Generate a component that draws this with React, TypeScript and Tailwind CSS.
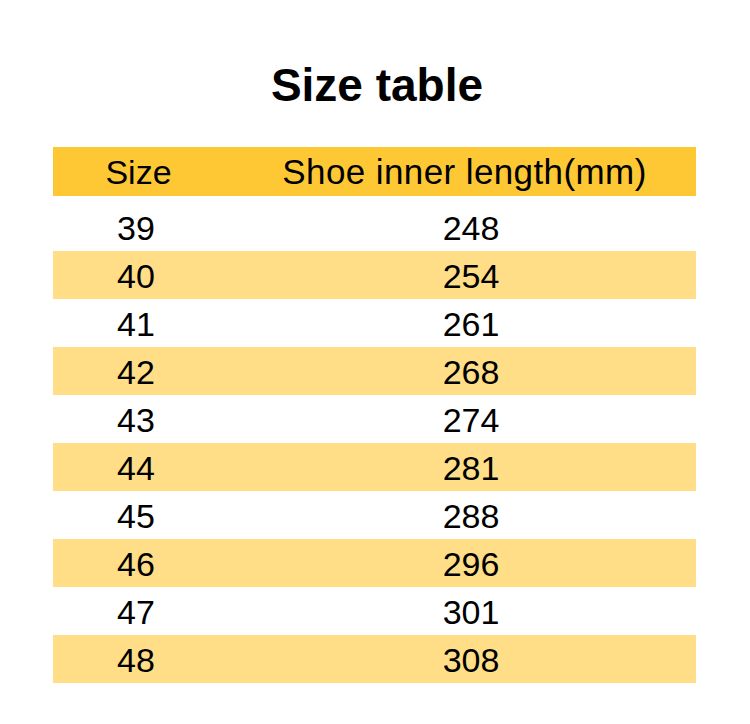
const rows = [
  ["39", "248"],
  ["40", "254"],
  ["41", "261"],
  ["42", "268"],
  ["43", "274"],
  ["44", "281"],
  ["45", "288"],
  ["46", "296"],
  ["47", "301"],
  ["48", "308"],
]

export default function App() {
  return (
    <div className="w-[750px] h-[724px] bg-white text-black font-['Liberation_Sans',Arial,sans-serif]">
      <h1 className="pt-[62px] pl-[4px] text-center text-[46px] font-bold leading-none">Size table</h1>

      <div className="mx-[53px] mt-[39px] w-[643px]">
        {/* header bar */}
        <div className="flex h-[49px] items-center bg-[#fec834] leading-none">
          <div className="w-[166px] text-center pl-[5px] text-[34px]">Size</div>
          <div className="flex-1 text-center pl-[14px] text-[35px] tracking-[0.4px]">Shoe inner length(mm)</div>
        </div>

        <div className="mt-[7px]">
          {rows.map(([size, len], i) => (
            <div
              key={size}
              className={
                "flex h-[48px] items-center pt-[1px] text-[34px] leading-none " +
                (i % 2 === 1 ? "bg-[#ffde87]" : "bg-white")
              }
            >
              <div className="w-[166px] text-center">{size}</div>
              <div className="flex-1 text-center pl-[27px]">{len}</div>
            </div>
          ))}
        </div>
      </div>
    </div>
  )
}
